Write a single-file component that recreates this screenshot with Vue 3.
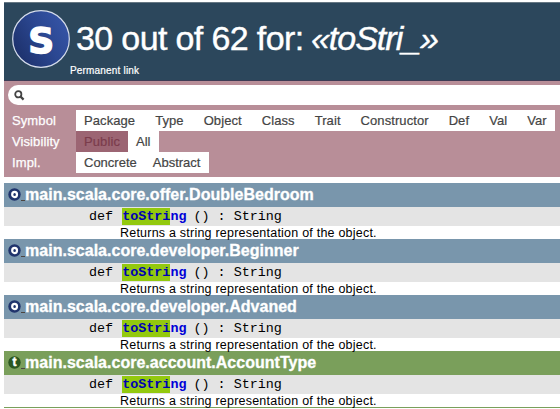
<script setup>
const symbols = ['Package', 'Type', 'Object', 'Class', 'Trait', 'Constructor', 'Def', 'Val', 'Var']
const results = [
  { name: 'main.scala.core.offer.DoubleBedroom', kind: 'o' },
  { name: 'main.scala.core.developer.Beginner', kind: 'o' },
  { name: 'main.scala.core.developer.Advaned', kind: 'o' },
  { name: 'main.scala.core.account.AccountType', kind: 't' },
]
</script>

<template>
  <main class="page">
    <header class="head">
      <svg class="logo" width="60" height="60" viewBox="0 0 60 60">
        <defs>
          <linearGradient id="disc" x1="0" y1="0.8" x2="1" y2="0.2">
            <stop offset="0" stop-color="#1c2f68" />
            <stop offset="0.55" stop-color="#2b4791" />
            <stop offset="1" stop-color="#3655a8" />
          </linearGradient>
        </defs>
        <circle cx="30" cy="30" r="28.3" fill="url(#disc)" stroke="#d5dcec" stroke-width="1.2" />
        <text x="30.2" y="44" text-anchor="middle" class="logo-letter">S</text>
      </svg>
      <div class="titles">
        <h1><span class="count">30 out of 62 for:</span> <em>«toStri_»</em></h1>
        <a class="permalink">Permanent link</a>
      </div>
    </header>
    <section class="filter">
      <div class="search">
        <svg width="11" height="11" viewBox="0 0 11 11">
          <circle cx="4.3" cy="4.3" r="3.1" fill="none" stroke="#444" stroke-width="1.8" />
          <path d="M6.6 6.6L9.6 9.6" stroke="#444" stroke-width="2.2" />
        </svg>
      </div>
      <div class="row">
        <span class="label">Symbol</span>
        <div class="options wide"><span v-for="s in symbols" :key="s">{{ s }}</span></div>
      </div>
      <div class="row">
        <span class="label">Visibility</span>
        <div class="options"><span class="selected">Public</span><span>All</span></div>
      </div>
      <div class="row">
        <span class="label">Impl.</span>
        <div class="options"><span>Concrete</span><span>Abstract</span></div>
      </div>
    </section>
    <section class="results">
      <article v-for="r in results" :key="r.name">
        <h2 :class="r.kind">
          <svg width="13" height="13" viewBox="0 0 13 13">
            <circle cx="6.5" cy="6.5" r="6.2" class="disc" />
            <ellipse v-if="r.kind === 'o'" cx="6.6" cy="6.5" rx="2.4" ry="2.6" class="ring" />
            <text v-else x="6.5" y="10.4" text-anchor="middle" class="glyph">t</text>
          </svg>
          <i class="tick"></i>
          <span class="name">{{ r.name }}</span>
        </h2>
        <div class="sig">def <b><mark>toStri</mark>ng</b> () : String</div>
        <p>Returns a string representation of the object.</p>
      </article>
    </section>
  </main>
</template>

<style>
body { background: #fff; overflow: hidden; }
</style>

<style scoped>
.page {
  box-sizing: border-box;
  height: 409px;
  padding: 2px 0 0 4px;
  overflow: hidden;
  font-family: "Liberation Sans", Arial, sans-serif;
}
.head {
  box-sizing: border-box;
  height: 79px;
  display: flex;
  padding: 6px 0 0 7px;
  background: #2c475c;
  border-top: 1px solid #667783;
  border-bottom: 1px solid #3d3b55;
  color: #fff;
}
.logo { flex: none; }
.logo-letter { font: bold 36px "DejaVu Sans", sans-serif; fill: #fff; stroke: #fff; stroke-width: 1.4px; }
.titles { padding-top: 9px; }
h1 {
  margin: 0 0 0 5px;
  font-size: 34px;
  font-weight: 400;
  line-height: 40px;
  white-space: nowrap;
  -webkit-text-stroke: 0.4px #fff;
}
.count { letter-spacing: -0.63px; }
em { margin-left: -2px; letter-spacing: -1px; }
.permalink {
  display: block;
  margin-top: 7px;
  margin-left: -1px;
  font-size: 10px;
  line-height: 12px;
  letter-spacing: 0.18px;
  -webkit-text-stroke: 0.2px #fff;
}
.filter {
  box-sizing: border-box;
  height: 96px;
  padding: 4px 0 0 4px;
  background: #b88e98;
}
.search {
  display: flex;
  align-items: center;
  height: 20px;
  margin-bottom: 5px;
  padding-left: 6px;
  background: #fff;
  border-radius: 10px 0 0 10px;
}
.row { display: flex; height: 21px; font-size: 13px; line-height: 21px; }
.label { width: 64px; padding-left: 4px; color: #fff; letter-spacing: 0.1px; -webkit-text-stroke: 0.25px #fff; }
.options { display: flex; background: #fff; color: #444; -webkit-text-stroke: 0.2px currentColor; }
.options span { padding: 0 8px; }
.options span:last-child { padding-right: 8.5px; }
.wide { gap: 4px; letter-spacing: 0.08px; }
.options .selected { background: #9c6573; color: #7b3c4c; letter-spacing: 0.1px; }
.results { margin-top: 6px; border-bottom: 1px solid #7a9f5b; }
h2 {
  display: flex;
  height: 24px;
  margin: 0;
  padding: 5px 0 0 4px;
  box-sizing: border-box;
  background: #7996ac;
  color: #fff;
  font-size: 16px;
  line-height: 16px;
}
h2 svg { overflow: visible; }
h2.t { background: #7a9f5b; }
.disc { fill: #20346c; }
.ring { fill: none; stroke: #fff; stroke-width: 2.2; }
.t .disc { fill: #2b5720; }
.glyph { font: bold 12px/12px "Liberation Sans", sans-serif; fill: #fff; stroke: #fff; stroke-width: 0.5px; }
.tick { width: 4px; height: 1px; margin-top: 12px; background: #4c4540; }
.name { white-space: nowrap; margin-top: -1px; letter-spacing: 0.02px; -webkit-text-stroke: 0.3px #fff; }
.sig {
  height: 19px;
  padding-left: 85px;
  background: #e4e4e4;
  font: 13.4px/19px "Liberation Mono", monospace;
  white-space: pre;
}
.sig b { margin: 0 -1px 0 1px; color: #0000d8; }
mark { background: #93c90e; color: #0000b4; padding: 1px 0; }
p {
  height: 13px;
  margin: 0;
  padding-left: 116px;
  font-size: 12.5px;
  line-height: 14px;
  letter-spacing: 0.22px;
  color: #000;
}
</style>
